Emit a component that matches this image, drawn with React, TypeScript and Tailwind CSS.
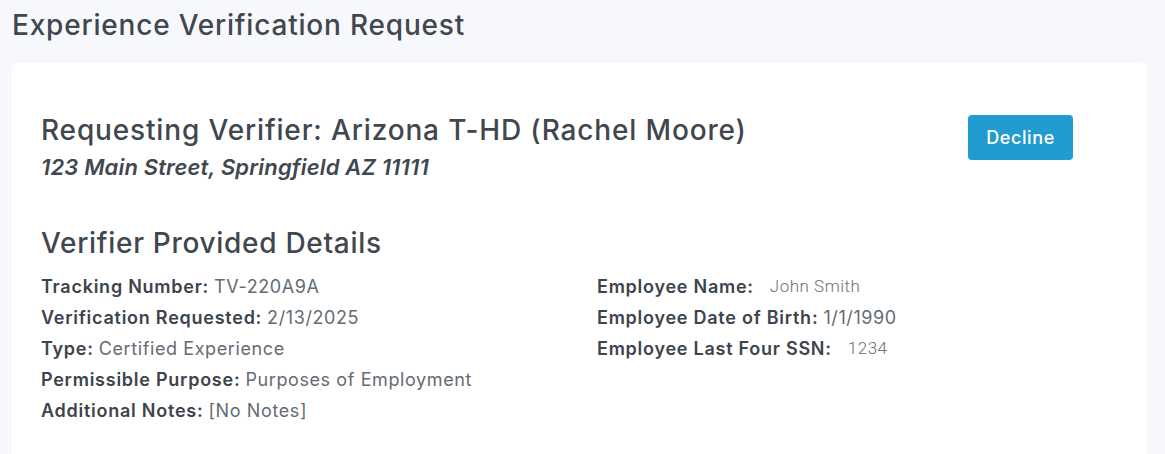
import React from "react";

const F = { fontFamily: "Inter, 'Noto Sans', sans-serif" };
const V = { fontFamily: "Roboto, 'Noto Sans', sans-serif" };

function Row({ label, value, alt }: { label: string; value: string; alt?: boolean }) {
  return (
    <div className="h-[31px] flex items-center text-[18px] leading-none">
      <span className="font-semibold text-[#3d444c] tracking-[0.75px]">{label}</span>
      {alt ? (
        <span className="ml-[16px] text-[17px] text-[#6a7078] font-light tracking-[0.5px]" style={V}>{value}</span>
      ) : (
        <span className="ml-[5px] text-[18px] text-[#646b73] tracking-[0.6px]">{value}</span>
      )}
    </div>
  );
}

export default function App() {
  return (
    <div className="min-h-screen bg-[#f7f8fc] pl-3 pr-[18px] overflow-hidden" style={F}>
      <h1 className="pt-[8px] text-[28px] leading-[34px] font-medium text-[#40474f] tracking-[0.8px]">
        Experience Verification Request
      </h1>
      <div className="mt-[21px] bg-white rounded-[7px] pl-[29px] pr-[74px] pt-[49px] pb-[40px] min-h-[420px]">
        <div className="flex justify-between items-start">
          <div>
            <h2 className="text-[28px] leading-[36px] font-medium text-[#40474f] tracking-[0.85px]">
              Requesting Verifier: Arizona T-HD (Rachel Moore)
            </h2>
            <p className="mt-[5px] text-[22px] leading-[28px] italic font-semibold text-[#40474f] tracking-[0.15px]">
              123 Main Street, Springfield AZ 11111
            </p>
          </div>
          <button className="mt-[3px] w-[105px] h-[45px] rounded-[4px] bg-[#219cd0] text-white text-[18px] font-medium tracking-[0.6px]">
            Decline
          </button>
        </div>
        <h3 className="mt-[44px] text-[28px] leading-[36px] font-medium text-[#40474f] tracking-[0.7px]">
          Verifier Provided Details
        </h3>
        <div className="mt-[10px] grid grid-cols-[556px_1fr]">
          <div>
            <Row label="Tracking Number:" value="TV-220A9A" />
            <Row label="Verification Requested:" value="2/13/2025" />
            <Row label="Type:" value="Certified Experience" />
            <Row label="Permissible Purpose:" value="Purposes of Employment" />
            <Row label="Additional Notes:" value="[No Notes]" />
          </div>
          <div>
            <Row label="Employee Name:" value="John Smith" alt />
            <Row label="Employee Date of Birth:" value="1/1/1990" />
            <Row label="Employee Last Four SSN:" value="1234" alt />
          </div>
        </div>
      </div>
    </div>
  );
}
